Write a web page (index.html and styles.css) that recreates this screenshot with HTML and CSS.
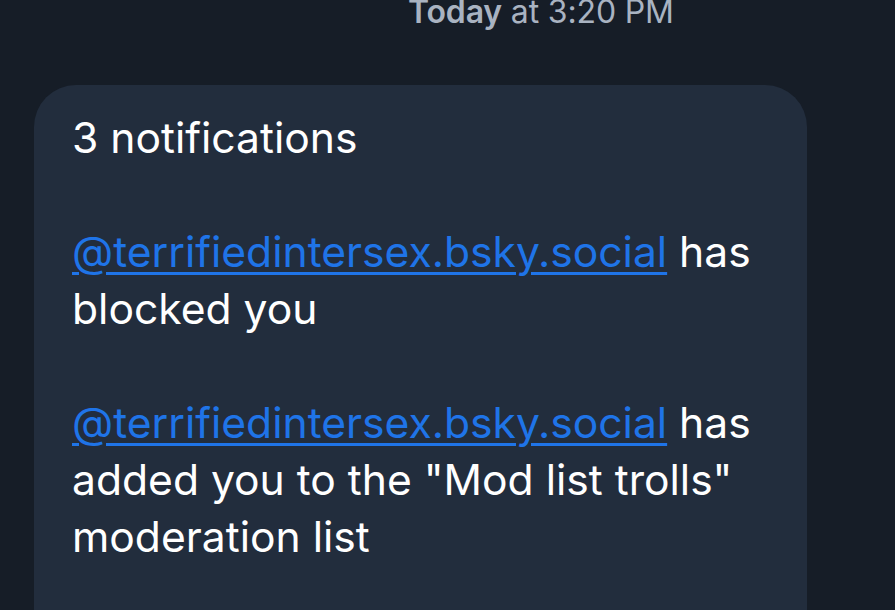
FILE: index.html
```html
<!DOCTYPE html>
<html>
<head>
<meta charset="utf-8">
<link rel="stylesheet" href="styles.css">
</head>
<body>
<div class="chat">
  <div class="stamp"><b>Today</b> at 3:20 PM</div>
  <div class="bubble">
    <p class="line">3 notifications</p>
    <p class="line"><a class="handle" href="#">@terrifiedintersex.bsky.social</a> has blocked you</p>
    <p class="line"><a class="handle" href="#">@terrifiedintersex.bsky.social</a> has added you to the "Mod list trolls" moderation list</p>
  </div>
</div>
</body>
</html>
```
FILE: styles.css
```css
html, body {
  margin: 0;
  padding: 0;
  background: #161d27;
  height: 100%;
  overflow: hidden;
}
.chat {
  font-family: Inter, "Noto Sans", sans-serif;
  display: flex;
  flex-direction: column;
}
.stamp {
  margin-top: -10px;
  padding-left: 408px;
  font-size: 32px;
  line-height: 44px;
  color: #a9b3c1;
  letter-spacing: -0.15px;
}
.stamp b {
  font-weight: 600;
}
.bubble {
  margin: 51px 0 0 34px;
  width: 773px;
  box-sizing: border-box;
  background: #222d3d;
  border-radius: 42px;
  padding: 24px 42px 60px 38px;
  color: #ffffff;
  font-size: 42.6px;
  line-height: 57px;
}
.line {
  margin: 0 0 57px 0;
}
.handle {
  color: #1f74e8;
  text-decoration: underline;
  text-decoration-thickness: 3px;
  text-underline-offset: 5px;
}
```
